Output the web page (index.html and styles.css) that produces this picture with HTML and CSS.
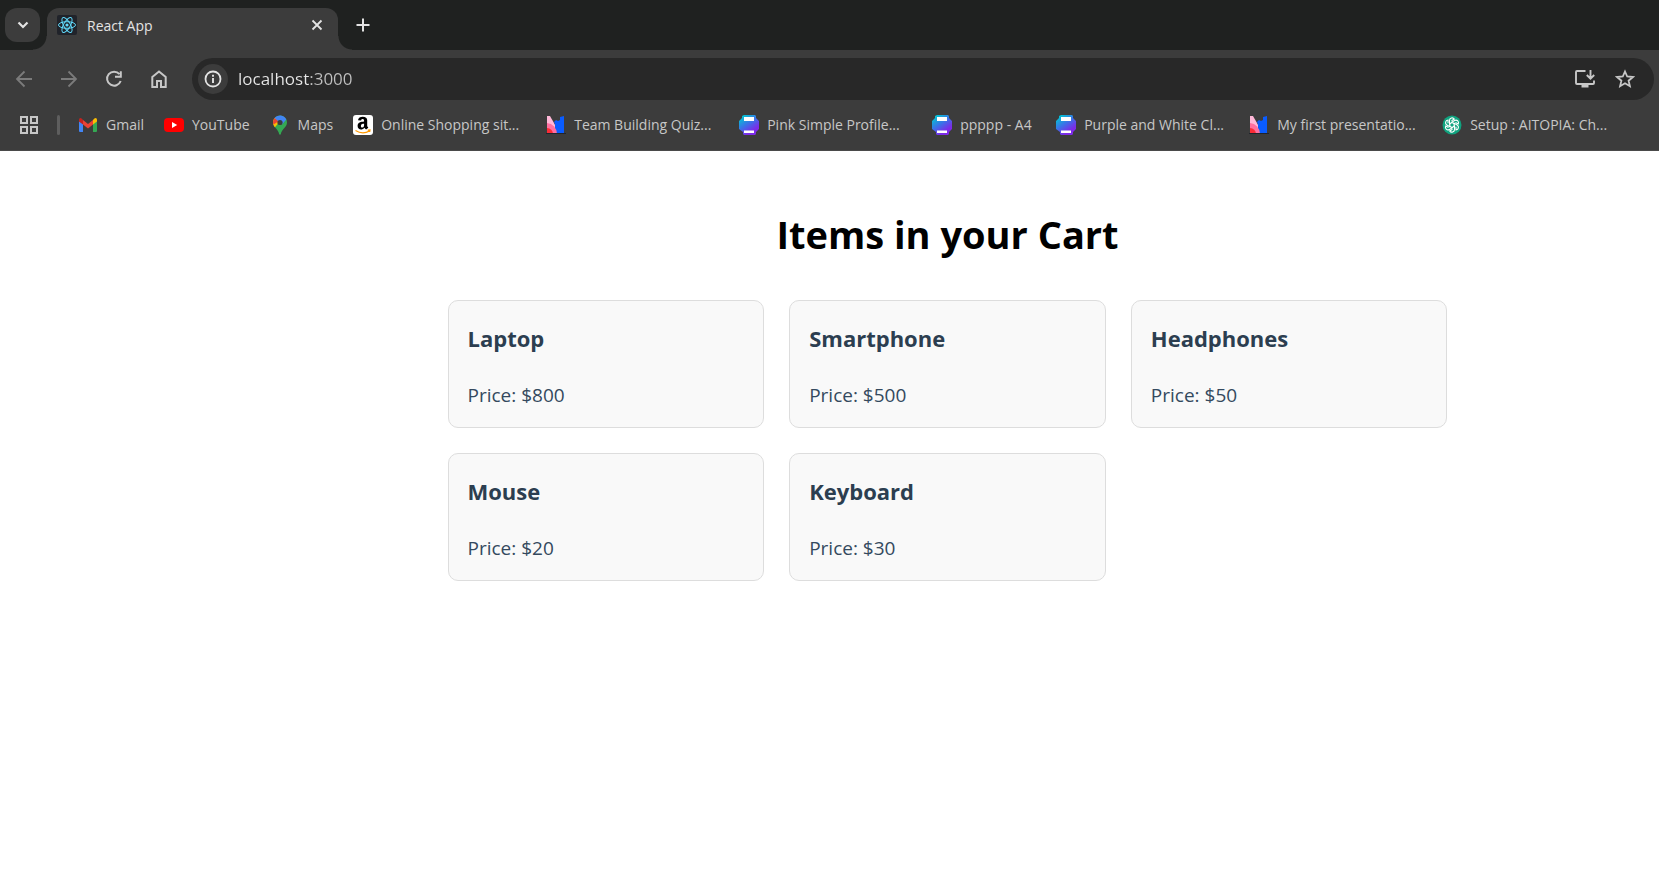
FILE: index.html
```html
<!DOCTYPE html>
<html lang="en">
<head>
<meta charset="utf-8">
<title>React App</title>
<link rel="stylesheet" href="styles.css">
</head>
<body>
<svg class="defs" aria-hidden="true">
  <defs>
    <linearGradient id="canva-fill" x1="0" y1="0" x2="0.7" y2="1">
      <stop offset="0.1" stop-color="#00c8d2"/><stop offset="0.5" stop-color="#3a72e8"/><stop offset="0.85" stop-color="#7d2ae8"/>
    </linearGradient>
    <symbol id="i-print" viewBox="0 0 20 20">
      <path d="M5 0h11l1 1v2l3 3v8l-3 3v2l-1 1H5l-1-1v-2l-4-3V6l3-3V1z" fill="url(#canva-fill)"/>
      <path d="M5 2h10v4H5zM5 15.500h10v2.500H5z" fill="#fff"/>
    </symbol>
    <symbol id="i-quiz" viewBox="0 0 20 20">
      <path d="M1 1h3l4 7 2 4v7H1z" fill="#ffb8d8"/>
      <path d="M8 7l2-2 2 1 2-1V2l4-1v18H9V9z" fill="#0a5cff"/>
      <path d="M1 8a11 11 0 0 1 10 11H1z" fill="#ff6fa0"/>
      <path d="M1 13a6 6 0 0 1 6 6H1z" fill="#fb2c36"/>
      <path d="M0 18h20v1H0z" fill="#20242c"/>
    </symbol>
  </defs>
</svg>

<header class="browser">
  <div class="tabstrip">
    <button class="tab-search" aria-label="Search tabs">
      <svg width="12" height="8" viewBox="0 0 12 8"><path d="M1.500 1.500 6 6l4.500-4.500" fill="none" stroke="currentColor" stroke-width="2.200"/></svg>
    </button>
    <div class="tab">
      <svg class="tab-icon" width="20" height="20" viewBox="0 0 20 20">
        <rect width="20" height="20" rx="2" fill="#20232a"/>
        <g fill="none" stroke="#61dafb" stroke-width="1">
          <ellipse cx="10" cy="10" rx="8.500" ry="3.300"/>
          <ellipse cx="10" cy="10" rx="8.500" ry="3.300" transform="rotate(60 10 10)"/>
          <ellipse cx="10" cy="10" rx="8.500" ry="3.300" transform="rotate(120 10 10)"/>
        </g>
        <circle cx="10" cy="10" r="1.600" fill="#61dafb"/>
      </svg>
      <span class="tab-title">React App</span>
      <button class="tab-close" aria-label="Close tab">
        <svg width="12" height="12" viewBox="0 0 12 12"><path d="m1.500 1.500 9 9m0-9-9 9" stroke="currentColor" stroke-width="1.800"/></svg>
      </button>
    </div>
    <button class="tab-new" aria-label="New tab">
      <svg width="14" height="14" viewBox="0 0 14 14"><path d="M7 .5v13M.5 7h13" stroke="currentColor" stroke-width="2"/></svg>
    </button>
  </div>

  <div class="toolbar">
    <button class="tool tool-off" aria-label="Back">
      <svg width="20" height="20" viewBox="0 0 20 20"><path d="M18 10H3m7.500-7.500L3 10l7.500 7.500" fill="none" stroke="currentColor" stroke-width="1.800"/></svg>
    </button>
    <button class="tool tool-off" aria-label="Forward">
      <svg width="20" height="20" viewBox="0 0 20 20"><path d="M2 10h15M9.500 2.500 17 10l-7.500 7.500" fill="none" stroke="currentColor" stroke-width="1.800"/></svg>
    </button>
    <button class="tool" aria-label="Reload">
      <svg width="20" height="20" viewBox="0 0 20 20"><path d="M15.500 5.200A7 7 0 1 0 16.700 12M16.800 2.300v5.500H11" fill="none" stroke="currentColor" stroke-width="2"/></svg>
    </button>
    <button class="tool" aria-label="Home">
      <svg width="20" height="20" viewBox="0 0 20 20"><path d="M3.300 8 10 2.500 16.700 8v10H12v-6H8v6H3.300z" fill="none" stroke="currentColor" stroke-width="2"/></svg>
    </button>
    <div class="omnibox">
      <button class="site-info" aria-label="View site information">
        <svg width="18" height="18" viewBox="0 0 18 18"><circle cx="9" cy="9" r="7.500" fill="none" stroke="currentColor" stroke-width="1.800"/><path d="M9 8v5M9 4.800v2" stroke="currentColor" stroke-width="1.900"/></svg>
      </button>
      <input class="url" type="text" value="localhost:3000" aria-label="Address">
      <button class="omni-btn" aria-label="Install app">
        <svg width="22" height="20" viewBox="0 0 22 20"><path d="M11.500 2H3q-1 0-1 1v11q0 1 1 1h16q1 0 1-1v-2.500M16.500 1v7.500M12.800 6l3.700 3.700L20.200 6" fill="none" stroke="currentColor" stroke-width="1.900"/><path d="M7.500 15h7v3.500h-7z" fill="currentColor"/></svg>
      </button>
      <button class="omni-btn" aria-label="Bookmark this tab">
        <svg width="20" height="20" viewBox="0 0 20 20"><path d="m10 2.500 2.200 5 5.700.5-4.300 3.700 1.300 5.500-4.900-2.900-4.900 2.900 1.300-5.500L2.100 8l5.700-.5z" fill="none" stroke="currentColor" stroke-width="1.800"/></svg>
      </button>
    </div>
  </div>

  <nav class="bookmarks" aria-label="Bookmarks">
    <button class="apps" aria-label="Apps">
      <svg width="18" height="18" viewBox="0 0 18 18"><path d="M1 1h6v6H1zM11 1h6v6h-6zM1 11h6v6H1zM11 11h6v6h-6z" fill="none" stroke="currentColor" stroke-width="2"/></svg>
    </button>
    <span class="divider"></span>
    <a class="mark" href="#">
      <svg width="20" height="20" viewBox="0 0 20 20">
        <path d="M1 6l4 3v8H2q-1 0-1-1z" fill="#4285f4"/><path d="M15 9l4-3v10q0 1-1 1h-3z" fill="#34a853"/>
        <path d="M5 5l5 4 5-4v4.500l-5 4-5-4z" fill="#ea4335"/><path d="M1 6V4.500Q1 3 2.500 3q1 0 2.500 2v4.500L1 6.500z" fill="#c5221f"/><path d="M19 6V4.500Q19 3 17.500 3q-1 0-2.500 2v4.500l4-3z" fill="#fbbc04"/>
      </svg>
      <span class="mark-text">Gmail</span>
    </a>
    <a class="mark" href="#">
      <svg width="20" height="20" viewBox="0 0 20 20"><rect y="3" width="20" height="14" rx="4" fill="#f00"/><path d="M8 7l5.200 3L8 13z" fill="#fff"/></svg>
      <span class="mark-text">YouTube</span>
    </a>
    <a class="mark" href="#">
      <svg width="20" height="20" viewBox="0 0 20 20">
        <path d="M10 .5a7 7 0 0 1 7 7c0 5-5.500 6.500-6.200 12h-1.600C8.500 14 3 12.500 3 7.500a7 7 0 0 1 7-7z" fill="#34a853"/>
        <path d="M4.700 3A7 7 0 0 0 3 7.500c0 2 .8 3.400 1.900 4.700l8-9.500z" fill="#fbbc04"/>
        <path d="M4.700 3A7 7 0 0 0 3.400 9.500L9 6z" fill="#ea4335"/>
        <path d="M4.600 3A7 7 0 0 1 16.300 4.500L12 9.500 8 6z" fill="#4285f4"/>
        <circle cx="10" cy="7.500" r="2.600" fill="#3c3c3c"/>
      </svg>
      <span class="mark-text">Maps</span>
    </a>
    <a class="mark mark-full" href="#">
      <svg width="20" height="20" viewBox="0 0 20 20">
        <rect width="20" height="20" rx="3" fill="#fff"/>
        <path d="M5 5.300C5.200 2.600 7.400 1.700 9.700 1.700c2.900 0 4.500 1.300 4.500 3.600v5.300c0 .9.500 1.400 1.100 2.100l-2.200 1.900q-1-.8-1.600-1.900c-2.200 2.700-6.900 2.400-6.900-1.700 0-3.700 3.300-4.200 6.500-4.500 0-1.500 0-2.400-1.400-2.400-.8 0-1.400.4-1.600 1.400zM11.100 8.700c-2 0-3.200.4-3.200 2.200 0 1.100.5 1.700 1.400 1.700 1.600 0 1.900-1.900 1.800-3.900z" fill="#000"/>
        <path d="M2.500 15.500q7 4.500 14 .5m-1.800-.9 2.300-.2-.3 2" fill="none" stroke="#ff9900" stroke-width="1.200"/>
      </svg>
      <span class="mark-text">Online Shopping sit...</span>
    </a>
    <a class="mark mark-full" href="#"><svg width="20" height="20"><use href="#i-quiz"/></svg><span class="mark-text">Team Building Quiz...</span></a>
    <a class="mark mark-full" href="#"><svg width="20" height="20"><use href="#i-print"/></svg><span class="mark-text">Pink Simple Profile...</span></a>
    <a class="mark mark-short" href="#"><svg width="20" height="20"><use href="#i-print"/></svg><span class="mark-text">ppppp - A4</span></a>
    <a class="mark mark-full" href="#"><svg width="20" height="20"><use href="#i-print"/></svg><span class="mark-text">Purple and White Cl...</span></a>
    <a class="mark mark-full" href="#"><svg width="20" height="20"><use href="#i-quiz"/></svg><span class="mark-text">My first presentatio...</span></a>
    <a class="mark mark-full" href="#">
      <svg width="20" height="20" viewBox="0 0 20 20">
        <circle cx="10" cy="10" r="9.500" fill="#10a37f"/>
        <g fill="none" stroke="#fff" stroke-width="1.100">
          <path id="petal" d="M10 7.500 7.500 9V5.500a2.600 2.600 0 0 1 4.800-1.400L9.500 5.700"/>
          <use href="#petal" transform="rotate(60 10 10)"/><use href="#petal" transform="rotate(120 10 10)"/><use href="#petal" transform="rotate(180 10 10)"/><use href="#petal" transform="rotate(240 10 10)"/><use href="#petal" transform="rotate(300 10 10)"/>
        </g>
      </svg>
      <span class="mark-text">Setup : AITOPIA: Ch...</span>
    </a>
  </nav>
</header>

<main class="page">
  <div class="cart">
    <h1 class="cart-title">Items in your Cart</h1>
    <ul class="items">
      <li class="item"><h3 class="item-name">Laptop</h3><p class="item-price">Price: $800</p></li>
      <li class="item"><h3 class="item-name">Smartphone</h3><p class="item-price">Price: $500</p></li>
      <li class="item"><h3 class="item-name">Headphones</h3><p class="item-price">Price: $50</p></li>
      <li class="item"><h3 class="item-name">Mouse</h3><p class="item-price">Price: $20</p></li>
      <li class="item"><h3 class="item-name">Keyboard</h3><p class="item-price">Price: $30</p></li>
    </ul>
  </div>
</main>
</body>
</html>
```
FILE: styles.css
```css
* { box-sizing: border-box; }

body {
  margin: 0;
  background: #fff;
  font-family: "Segoe UI", "Open Sans", "Noto Sans", sans-serif;
}

.defs { position: absolute; width: 0; height: 0; }

button {
  display: flex;
  align-items: center;
  justify-content: center;
  padding: 0;
  border: 0;
  background: none;
  color: inherit;
  font: inherit;
}

svg { display: block; flex: none; }

.browser {
  background: #3c3c3c;
  border-bottom: 1px solid #4a4a4a;
  color: #c7c7c7;
  font-size: 14px;
}

/* Tab strip */
.tabstrip {
  display: flex;
  align-items: flex-start;
  height: 50px;
  padding: 8px 5px 0;
  background: #1f2120;
}

.tab-search {
  width: 35px;
  height: 34px;
  border-radius: 12px;
  background: #3c3c3c;
  color: #e3e3e3;
}

.tab {
  position: relative;
  display: flex;
  align-items: center;
  width: 291px;
  height: 42px;
  margin-left: 7px;
  padding: 0 11px 8px 10px;
  border-radius: 12px 12px 0 0;
  background: #3c3c3c;
  color: #e3e3e3;
}

.tab::before,
.tab::after {
  content: "";
  position: absolute;
  bottom: 0;
  width: 14px;
  height: 14px;
}

.tab::before {
  right: 100%;
  background: radial-gradient(circle at 0 0, transparent 13px, #3c3c3c 14px);
}

.tab::after {
  left: 100%;
  background: radial-gradient(circle at 100% 0, transparent 13px, #3c3c3c 14px);
}

.tab-title { flex: 1; margin-left: 10px; }
.tab-close { width: 20px; height: 20px; }
.tab-new { width: 34px; height: 34px; margin-left: 8px; color: #e3e3e3; }

/* Toolbar */
.toolbar {
  display: flex;
  align-items: center;
  gap: 11px;
  padding: 8px 5px 0 7px;
}

.tool { width: 34px; height: 34px; }
.tool-off { color: #7b7b7b; }

.omnibox {
  display: flex;
  flex: 1;
  align-items: center;
  height: 42px;
  margin-left: 5px;
  padding: 0 9px 0 6px;
  border-radius: 21px;
  background: #282828;
}

.site-info {
  width: 30px;
  height: 30px;
  border-radius: 50%;
  background: #3c3c3c;
  color: #e3e3e3;
}

.url {
  flex: 1;
  min-width: 0;
  margin-left: 10px;
  padding: 0 0 2px;
  border: 0;
  outline: 0;
  background: linear-gradient(to right, #e8e8e8 72px, #c0c0c0 72px);
  background-clip: text;
  color: transparent;
  font-family: inherit;
  font-size: 17px;
}

.omni-btn { width: 40px; height: 34px; }

/* Bookmarks */
.bookmarks {
  display: flex;
  align-items: center;
  height: 50px;
  padding-left: 11px;
}

.apps { width: 36px; height: 34px; }

.divider {
  width: 3px;
  height: 20px;
  margin: 0 8px 0 10px;
  border-radius: 2px;
  background: #5e5e5e;
}

.mark {
  display: flex;
  align-items: center;
  gap: 8px;
  padding: 0 10px;
  color: inherit;
  text-decoration: none;
  white-space: nowrap;
}

.mark-full { width: 193px; }
.mark-short { width: 124px; }
.mark-text { padding-bottom: 2px; }

/* Cart page */
.page { padding: 55px 0 0 236px; }

.cart {
  max-width: 1000px;
  margin: 0 auto;
}

.cart-title {
  margin: 0 0 38px;
  color: #000;
  font-size: 38px;
  line-height: 56px;
  text-align: center;
}

.items {
  display: grid;
  grid-template-columns: repeat(3, 1fr);
  gap: 25px;
  margin: 0;
  padding: 0;
  list-style: none;
}

.item {
  padding: 21px 19px 18px;
  border: 1px solid #ddd;
  border-radius: 10px;
  background: #f9f9f9;
}

.item-name {
  margin: 0 0 27px;
  color: #2c3e50;
  font-size: 22px;
  line-height: 32px;
}

.item-price {
  margin: 0;
  color: #34495e;
  font-size: 19px;
  font-weight: 500;
  line-height: 28px;
}
```
